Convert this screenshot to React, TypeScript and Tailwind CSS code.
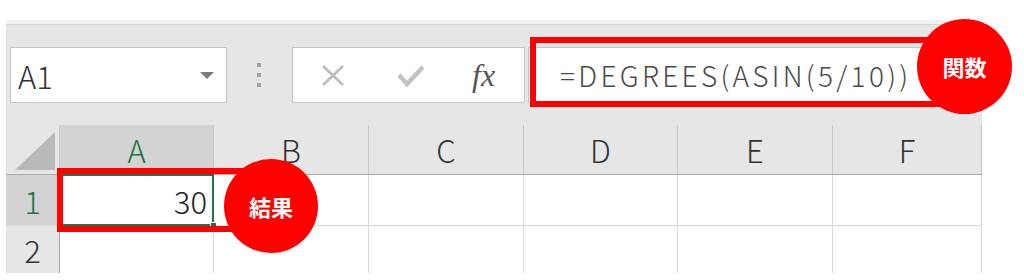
import React from 'react';

const font = "font-['Noto_Sans_CJK_JP','Noto_Sans',sans-serif]";

const columns = [
  { id: 'A', width: 'w-[154px]', selected: true },
  { id: 'B', width: 'w-[155px]', selected: false },
  { id: 'C', width: 'w-[155px]', selected: false },
  { id: 'D', width: 'w-[154px]', selected: false },
  { id: 'E', width: 'w-[155px]', selected: false },
  { id: 'F', width: 'w-[149px]', selected: false },
];

function FormulaBar() {
  return (
    <div className="flex h-[100px] items-center pl-[4px]">
      {/* Name box */}
      <div className="flex h-[56px] w-[217px] items-center justify-between border border-[#c6c6c6] bg-white pl-[7px] pr-[12px]">
        <span className="text-[31px] font-light leading-none text-[#333]">A1</span>
        <svg width="14" height="7" viewBox="0 0 14 7">
          <polygon points="0,0 14,0 7,7" fill="#7a7a7a" />
        </svg>
      </div>

      {/* grip dots */}
      <div className="ml-[30px] flex flex-col gap-[6px]">
        <div className="h-[4px] w-[4px] bg-[#a4a4a4]" />
        <div className="h-[4px] w-[4px] bg-[#a4a4a4]" />
        <div className="h-[4px] w-[4px] bg-[#a4a4a4]" />
      </div>

      {/* cancel / enter / fx */}
      <div className="ml-[31px] flex h-[56px] w-[233px] items-center border border-[#c6c6c6] bg-white">
        <svg className="ml-[28px]" width="24" height="21" viewBox="0 0 24 21">
          <path d="M2 1 L22 20 M22 1 L2 20" stroke="#bdbdbd" strokeWidth="2.6" fill="none" />
        </svg>
        <svg className="ml-[52px]" width="28" height="23" viewBox="0 0 28 23">
          <polyline points="2,11 10,20 26,3" stroke="#c3c3c3" strokeWidth="4.5" fill="none" />
        </svg>
        <span className="ml-[47px] font-['Liberation_Serif',serif] text-[32px] italic leading-none text-[#555]">
          fx
        </span>
      </div>

      {/* formula input */}
      <div className="ml-[3px] flex h-[56px] flex-1 items-center border border-[#c6c6c6] bg-white pl-[31px]">
        <span className="text-[28px] font-light leading-none tracking-[3.3px] text-[#4a4a4a]">=DEGREES(ASIN(5/10))</span>
      </div>
    </div>
  );
}

function HeaderRow() {
  return (
    <div className="flex h-[50px] border-b border-[#ababab]">
      <div className="w-[54px] border-r border-[#c8c8c8]">
        <svg width="54" height="50" viewBox="0 0 54 50">
          <polygon points="49,7 49,45 9,45" fill="#b9b9b9" />
        </svg>
      </div>
      {columns.map((col) => (
        <div
          key={col.id}
          className={
            col.selected
              ? `${col.width} flex items-center justify-center border-r border-[#c8c8c8] bg-[#d3d3d3] text-[31px] font-light leading-none text-[#217346]`
              : `${col.width} flex items-center justify-center border-r border-[#c8c8c8] text-[31px] font-light leading-none text-[#333]`
          }
        >
          {col.id}
        </div>
      ))}
    </div>
  );
}

function BodyRow({ n, selected, height }: { n: number; selected: boolean; height: string }) {
  return (
    <div className={`flex ${height} border-b border-[#dadada] bg-white`}>
      <div
        className={
          selected
            ? 'flex w-[54px] items-center justify-center border-r border-[#ababab] bg-[#d3d3d3] text-[31px] font-light leading-none text-[#217346]'
            : 'flex w-[54px] items-center justify-center border-r border-[#ababab] bg-[#e6e6e6] text-[31px] font-light leading-none text-[#333]'
        }
      >
        {n}
      </div>
      {columns.map((col, i) => (
        <div key={col.id} className={`${col.width} relative border-r border-[#dadada]`}>
          {selected && i === 0 && (
            <>
              <div className="absolute -top-px -left-px right-[-1px] bottom-[-1px] border-2 border-[#217346]" />
              <div className="absolute right-[6px] top-0 flex h-full items-center text-[31px] font-light leading-none text-[#222]">
                30
              </div>
              <div className="absolute bottom-[-4px] right-[-4px] h-[7px] w-[7px] border border-white bg-[#217346]" />
            </>
          )}
        </div>
      ))}
    </div>
  );
}

export default function App() {
  return (
    <div className={`relative h-[280px] w-[1024px] overflow-hidden bg-white ${font}`}>
      <div className="ml-[6px] w-[976px] pt-[20px]">
        <div className="h-[253px] overflow-hidden bg-[#e6e6e6]">
          <div className="h-[4px] bg-[#f1f1f1]" />
          <div className="h-px bg-[#d6d6d6]" />
          <FormulaBar />
          <HeaderRow />
          <BodyRow n={1} selected height="h-[51px]" />
          <BodyRow n={2} selected={false} height="h-[48px]" />
        </div>
      </div>

      {/* callouts */}
      <div className="absolute left-[530px] top-[37px] h-[70px] w-[410px] border-[6px] border-[#ff0000]" />
      <div className="absolute left-[917px] top-[19px] flex h-[95px] w-[95px] items-center justify-center rounded-full bg-[#ff0000] text-[22px] font-bold text-white">
        関数
      </div>

      <div className="absolute left-[57px] top-[168px] h-[64px] w-[190px] border-[6px] border-[#ff0000]" />
      <div className="absolute left-[224px] top-[159px] flex h-[94px] w-[94px] items-center justify-center rounded-full bg-[#ff0000] text-[22px] font-bold text-white">
        結果
      </div>
    </div>
  );
}
